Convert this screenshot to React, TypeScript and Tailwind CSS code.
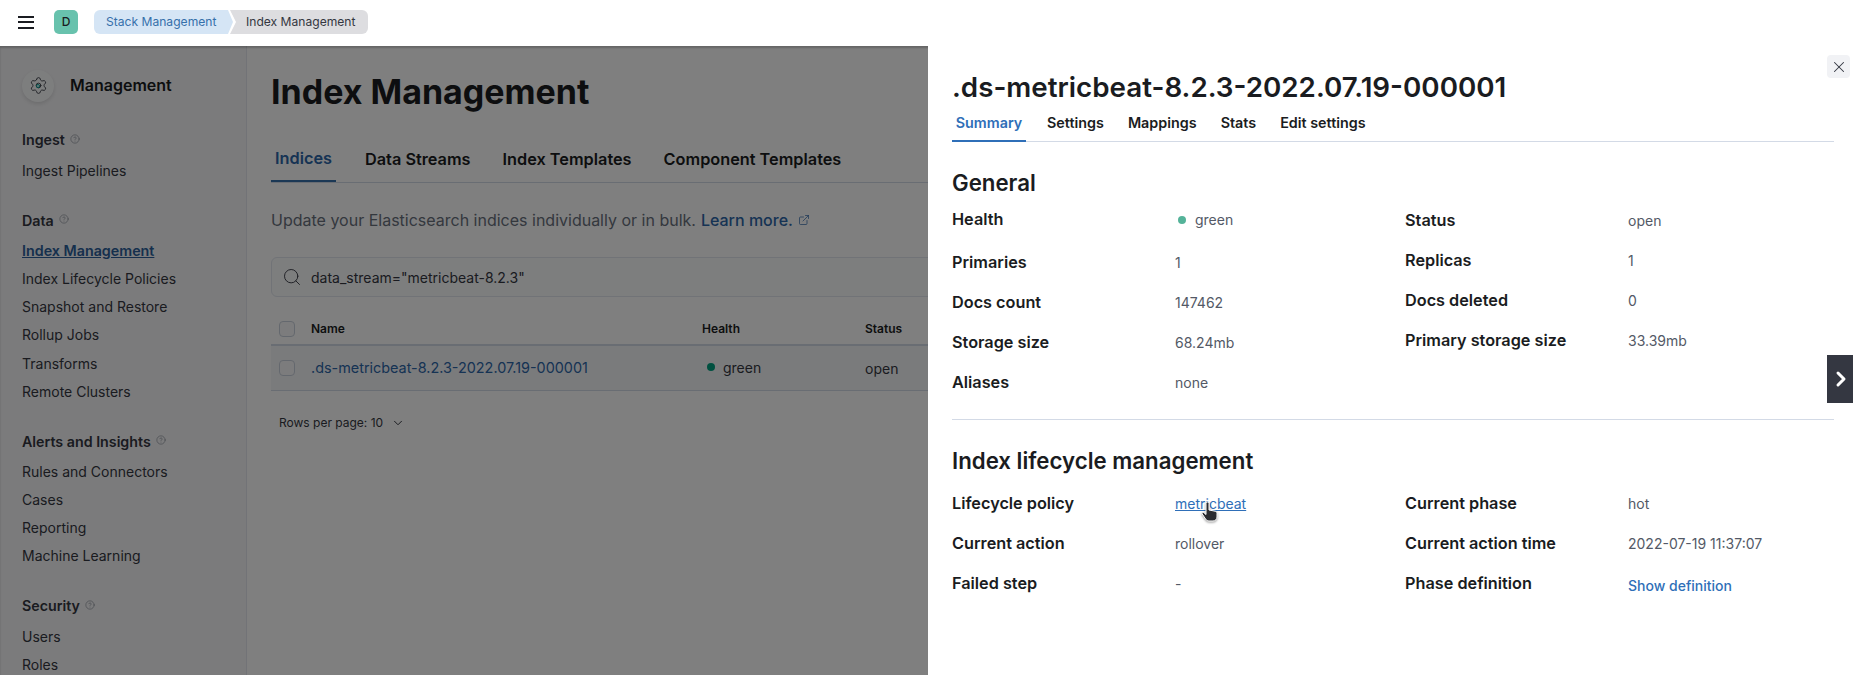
import React from 'react';
import { ChevronDown, ChevronRight, CircleHelp, ExternalLink, Search, Settings, X } from 'lucide-react';

const sideGroups = [
  { title: 'Ingest', items: ['Ingest Pipelines'] },
  {
    title: 'Data',
    items: ['Index Management', 'Index Lifecycle Policies', 'Snapshot and Restore', 'Rollup Jobs', 'Transforms', 'Remote Clusters'],
  },
  { title: 'Alerts and Insights', items: ['Rules and Connectors', 'Cases', 'Reporting', 'Machine Learning'] },
  { title: 'Security', items: ['Users', 'Roles'] },
];

function Checkbox() {
  return <span className="block h-4 w-4 rounded-[4px] border border-[#c9d0dc] bg-[#f8f9fb]" />;
}

function Sidebar() {
  return (
    <aside className="w-[247px] shrink-0 border-r border-[#e4e7ee] bg-[#f7f7f9] pl-[22px] pt-[24px]">
      <div className="flex h-[32px] items-center">
        <div className="relative -mt-px flex h-[32px] w-[32px] items-center justify-center rounded-full bg-[#fbfcfd] shadow-[0_2px_4px_rgba(0,0,0,0.12)]">
          <Settings size={19} strokeWidth={1.1} className="text-[#343741]" />
          <span className="absolute left-[14px] top-[14px] h-[4px] w-[4px] rounded-full border border-[#00a69b]" />
        </div>
        <span className="-mt-[3px] ml-[16px] text-[16px] font-semibold text-[#1a1c21]">Management</span>
      </div>
      <nav className="pt-[28px]">
        {sideGroups.map((group) => (
          <div key={group.title} className="mb-[26px]">
            <div className="flex h-[20px] items-center text-[14.25px] font-semibold text-[#343741]">
              {group.title}
              <CircleHelp size={10} strokeWidth={1.2} className="ml-[5px] -mt-[2px] text-[#69707d]" />
            </div>
            <ul className="pt-[6px]">
              {group.items.map((item) => (
                <li
                  key={item}
                  className={
                    item === 'Index Management'
                      ? 'flex h-[28.2px] items-center text-[14.3px] font-semibold text-[#2c5f9b] underline'
                      : 'flex h-[28.2px] items-center text-[14px] text-[#343741]'
                  }
                >
                  {item}
                </li>
              ))}
            </ul>
          </div>
        ))}
      </nav>
    </aside>
  );
}

function MainContent() {
  return (
    <main className="min-w-0 flex-1 bg-white pl-[24px]">
      <h1 className="flex h-[90px] items-center text-[34px] font-bold text-[#1a1c21]">Index Management</h1>
      <div className="mt-[3px] flex h-[44px] items-end border-b border-[#d3dae6]">
        <div className="flex h-[44px] w-[65px] items-center justify-center border-b-2 border-[#3670ab] pb-[2px] text-[16.3px] font-semibold text-[#2c66a8]">
          Indices
        </div>
        <div className="flex h-[44px] items-center gap-[32px] pb-[2px] pl-[29px] text-[16.3px] font-semibold text-[#1a1c21]">
          <span>Data Streams</span>
          <span>Index Templates</span>
          <span>Component Templates</span>
        </div>
      </div>
      <p className="flex h-[74px] items-center text-[16px] text-[#69707d]">
        Update your Elasticsearch indices individually or in bulk.
        <span className="ml-[5px] font-medium text-[#2c66a8]">Learn more.</span>
        <ExternalLink size={12} strokeWidth={1.4} className="ml-[5px] text-[#2c66a8]" />
      </p>
      <div className="flex h-[40px] items-center rounded-[6px] border border-[#e2e6ee] bg-[#fbfcfd] pl-[10px] text-[14px] text-[#343741]">
        <Search size={20} strokeWidth={1.1} className="text-[#343741]" />
        <span className="ml-[9px]">data_stream="metricbeat-8.2.3"</span>
      </div>
      <div className="mt-[16px] flex h-[33px] items-center border-b-2 border-[#d3dae6] pl-[8px] text-[12px] font-semibold text-[#1a1c21]">
        <Checkbox />
        <span className="ml-[16px] w-[391px]">Name</span>
        <span className="w-[163px]">Health</span>
        <span>Status</span>
      </div>
      <div className="flex h-[45px] items-center border-b border-[#d3dae6] bg-[#f5f6f9] pl-[8px] text-[14px] text-[#343741]">
        <Checkbox />
        <span className="ml-[16px] w-[391px] text-[14.4px] text-[#2c66a8]">.ds-metricbeat-8.2.3-2022.07.19-000001</span>
        <span className="flex w-[163px] items-center pb-[1px] pl-[5px]">
          <span className="-mt-[2px] mr-[8px] h-[8px] w-[8px] rounded-full bg-[#00a080]" />
          green
        </span>
        <span>open</span>
      </div>
      <div className="flex h-[63px] items-center pl-[8px] text-[12px] text-[#343741]">
        Rows per page: 10
        <ChevronDown size={14} strokeWidth={1.7} className="ml-[8px]" />
      </div>
    </main>
  );
}

function DetailRow({ label, value, className = 'h-[40px]' }: { label: string; value: React.ReactNode; className?: string }) {
  return (
    <div className={`flex items-center ${className}`}>
      <dt className="w-[223px] text-[16.25px] font-semibold text-[#1a1c21]">{label}</dt>
      <dd className="pt-[1px] text-[14px] text-[#535966]">{value}</dd>
    </div>
  );
}

function HandCursor() {
  return (
    <svg width="18" height="22" viewBox="0 0 18 22" className="absolute left-[26px] top-[6px] drop-shadow-[0_1px_1px_rgba(0,0,0,0.4)]">
      <path
        d="M5 2.5a1.5 1.5 0 0 1 3 0V9l6.2 1.2c1 .2 1.8 1 1.8 2V16c0 2-1.5 4-4 4H8c-1.5 0-2.5-.7-3.3-1.8L1.2 13c-.6-1 .6-2.2 1.6-1.4L5 13.5z"
        fill="#2b2c30"
        stroke="#ffffff"
        strokeWidth="1"
      />
    </svg>
  );
}

function Flyout() {
  return (
    <section className="absolute bottom-0 left-[928px] right-0 top-[46px] bg-white pl-[24px] pr-[19px]">
      <div className="absolute right-[3px] top-[9px] flex h-[23px] w-[23px] items-center justify-center rounded-[4px] bg-[#f1f2f5]">
        <X size={18} strokeWidth={1.4} className="text-[#343741]" />
      </div>
      <div className="absolute right-0 top-[309px] flex h-[48px] w-[26px] items-center justify-center bg-[#343741]">
        <ChevronRight size={24} strokeWidth={3} className="ml-[2px] text-white" />
      </div>

      <h2 className="flex h-[65px] items-end pb-[6px] text-[27.75px] font-semibold leading-[36px] text-[#1a1c21]">
        .ds-metricbeat-8.2.3-2022.07.19-000001
      </h2>
      <div className="flex h-[31px] border-b border-[#d3dae6] text-[14.35px] font-semibold text-[#1a1c21]">
        <div className="flex h-[31px] w-[74px] items-center justify-center border-b-2 border-[#2f6fb8] pb-[6px] text-[#2f6fb8]">Summary</div>
        <div className="flex h-[30px] items-center gap-[24px] pb-[7px] pl-[21px]">
          <span>Settings</span>
          <span>Mappings</span>
          <span>Stats</span>
          <span>Edit settings</span>
        </div>
      </div>

      <h3 className="flex h-[58px] items-end pb-[2px] text-[22.25px] font-semibold leading-[30px] text-[#1a1c21]">General</h3>
      <div className="flex">
        <dl className="w-[453px]">
          <DetailRow
            label="Health"
            className="mb-[4px] h-[38px]"
            value={
              <span className="flex items-center pl-[3px]">
                <span className="mr-[9px] h-[8px] w-[8px] rounded-full bg-[#54b399]" />
                green
              </span>
            }
          />
          <DetailRow label="Primaries" value="1" />
          <DetailRow label="Docs count" value="147462" />
          <DetailRow label="Storage size" value="68.24mb" />
          <DetailRow label="Aliases" value="none" />
        </dl>
        <dl>
          <DetailRow label="Status" value="open" />
          <DetailRow label="Replicas" value="1" />
          <DetailRow label="Docs deleted" value="0" />
          <DetailRow label="Primary storage size" value="33.39mb" />
        </dl>
      </div>

      <div className="mt-[17px] border-t border-[#d3dae6]" />
      <h3 className="flex h-[57px] items-end pb-[1px] text-[22.25px] font-semibold leading-[30px] text-[#1a1c21]">Index lifecycle management</h3>
      <div className="flex pt-[6px]">
        <dl className="w-[453px]">
          <DetailRow
            label="Lifecycle policy"
            value={
              <span className="relative text-[#2f6fb8] underline">
                metricbeat
                <HandCursor />
              </span>
            }
          />
          <DetailRow label="Current action" value="rollover" />
          <DetailRow label="Failed step" value="-" />
        </dl>
        <dl>
          <DetailRow label="Current phase" value="hot" />
          <DetailRow label="Current action time" value="2022-07-19 11:37:07" />
          <DetailRow label="Phase definition" value={<span className="relative top-[2px] font-medium text-[#2f6fb8]">Show definition</span>} />
        </dl>
      </div>
    </section>
  );
}

export default function App() {
  return (
    <div className="relative h-[675px] w-[1853px] overflow-hidden bg-white font-['Inter',sans-serif]">
      <header className="flex h-[46px] items-center bg-white pb-[2px] pl-[18px]">
        <div className="flex w-[16px] flex-col gap-[3.5px]">
          <span className="h-[2px] bg-[#1a1c21]" />
          <span className="h-[2px] bg-[#1a1c21]" />
          <span className="h-[2px] bg-[#1a1c21]" />
        </div>
        <div className="ml-[20px] flex h-[24px] w-[24px] items-center justify-center rounded-[5px] bg-[#68c2ad] text-[12px] font-medium text-[#1a1c21]">D</div>
        <nav className="ml-[16px] flex h-[24px] text-[12.1px]">
          <span className="flex w-[139px] items-center rounded-l-[6px] bg-[#d5e5f5] pl-[12px] text-[#3670ab] [clip-path:polygon(0_0,134px_0,100%_50%,134px_100%,0_100%)]">
            Stack Management
          </span>
          <span className="-ml-[3px] flex w-[138px] items-center rounded-r-[6px] bg-[#dddde0] pl-[16px] text-[#343741] [clip-path:polygon(0_0,100%_0,100%_100%,0_100%,6px_50%)]">
            Index Management
          </span>
        </nav>
      </header>
      <div className="flex h-[629px]">
        <Sidebar />
        <MainContent />
      </div>
      {/* mask behind the flyout */}
      <div className="absolute inset-x-0 bottom-0 top-[46px] bg-black/50 shadow-[inset_0_2px_2px_rgba(0,0,0,0.2)]" />
      <Flyout />
    </div>
  );
}
